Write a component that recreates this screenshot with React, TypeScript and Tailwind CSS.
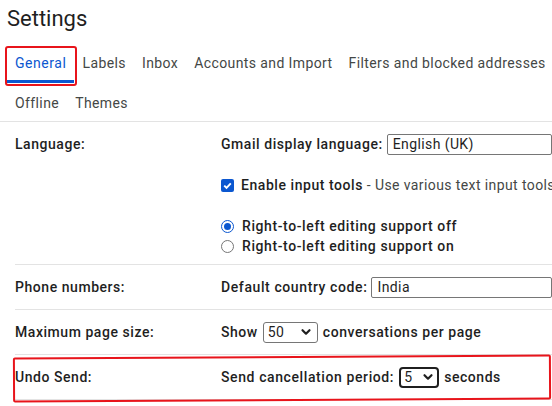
import React from "react";

const Chevron = () => (
  <svg width="12" height="12" viewBox="0 0 12 12" className="shrink-0">
    <path d="M2.5 4.2 L6 7.7 L9.5 4.2" fill="none" stroke="#1f1f1f" strokeWidth="2.2" strokeLinecap="round" strokeLinejoin="round" />
  </svg>
);

const Row = ({ label, children, tall }: { label: string; children: React.ReactNode; tall?: boolean }) => (
  <div className={`ml-[15px] flex border-b border-[#e3e3e3] ${tall ? "" : "h-[45px] items-center"}`}>
    <div className={`w-[206px] shrink-0 font-medium tracking-[0.55px] text-[#1f1f1f] ${tall ? "pt-[12px] leading-[21px]" : ""}`}>{label}</div>
    <div className="flex-1 min-w-0">{children}</div>
  </div>
);

export default function App() {
  const tabs1 = ["General", "Labels", "Inbox", "Accounts and Import", "Filters and blocked addresses"];
  const tabs2 = ["Offline", "Themes"];
  return (
    <div
      className="relative w-[552px] h-[406px] overflow-hidden bg-white text-[14px] tracking-[0.4px] whitespace-nowrap text-[#1f1f1f]"
      style={{ fontFamily: "Roboto, 'Noto Sans', sans-serif" }}
    >
      <div className="pl-[7px] pt-[5px] text-[22px] leading-[28px] tracking-normal text-[#1f1f1f]">Settings</div>
      <div className="flex pl-[7px] mt-[10px]">
        {tabs1.map((t, i) => (
          <div
            key={t}
            className={`h-[40px] px-2 flex items-center shrink-0 ${i === 0 ? "text-[#0b57d0] border-b-[3px] border-[#0b57d0] pt-[3px] tracking-[0.55px]" : "text-[#444746]"}`}
          >
            {t}
          </div>
        ))}
      </div>
      <div className="flex pl-[7px]">
        {tabs2.map((t) => (
          <div key={t} className="h-[38px] pt-[2px] px-2 flex items-center text-[#444746]">
            {t}
          </div>
        ))}
      </div>
      <div className="border-t border-[#e3e3e3]" />

      <Row label="Language:" tall>
        <div className="pt-[12px] pb-[8px]">
          <div className="flex items-center h-[21px]">
            <span className="font-medium tracking-[0.55px]">Gmail display language:</span>
            <div className="ml-[4px] h-[21px] w-[200px] border border-[#767676] rounded-[2px] flex items-center pl-[5px]">
              English (UK)
            </div>
          </div>
          <div className="flex items-center h-[20px] mt-[20px]">
            <span className="w-[13px] h-[13px] rounded-[2px] bg-[#0b57d0] flex items-center justify-center mr-[7px] shrink-0">
              <svg width="11" height="11" viewBox="0 0 11 11">
                <path d="M2.2 5.6 L4.5 7.8 L8.8 3.3" fill="none" stroke="white" strokeWidth="1.9" />
              </svg>
            </span>
            <span className="font-medium tracking-[0.55px]">Enable input tools</span>
            <span className="text-[#444746]">&nbsp;- Use various text input tools</span>
          </div>
          <div className="flex items-center h-[20px] mt-[21px] font-medium tracking-[0.6px]">
            <span className="w-[13px] h-[13px] rounded-full border-[1.5px] border-[#0b57d0] flex items-center justify-center mr-[8px] shrink-0">
              <span className="w-[7px] h-[7px] rounded-full bg-[#0b57d0]" />
            </span>
            Right-to-left editing support off
          </div>
          <div className="flex items-center h-[20px] font-medium tracking-[0.6px]">
            <span className="w-[13px] h-[13px] rounded-full border border-[#767676] mr-[8px] shrink-0" />
            Right-to-left editing support on
          </div>
        </div>
      </Row>

      <Row label="Phone numbers:">
        <div className="flex items-center">
          <span className="font-medium tracking-[0.6px]">Default country code:</span>
          <div className="ml-[4px] h-[21px] w-[200px] border border-[#767676] rounded-[2px] flex items-center pl-[5px]">
            India
          </div>
        </div>
      </Row>

      <Row label="Maximum page size:">
        <div className="flex items-center">
          <span className="font-medium tracking-[0.55px]">Show</span>
          <div className="ml-[5px] h-[21px] w-[55px] border border-[#767676] rounded-[3px] flex items-center justify-between pl-[4px] pr-[5px]">
            <span>50</span>
            <Chevron />
          </div>
          <span className="ml-[5px] font-medium tracking-[0.55px]">conversations per page</span>
        </div>
      </Row>

      <Row label="Undo Send:">
        <div className="flex items-center">
          <span className="font-medium tracking-[0.6px]">Send cancellation period:</span>
          <div className="ml-[5px] h-[21px] w-[40px] border-2 border-[#1f1f1f] rounded-[4px] flex items-center justify-between pl-[3px] pr-[3px]">
            <span>5</span>
            <Chevron />
          </div>
          <span className="ml-[5px] font-medium tracking-[0.55px]">seconds</span>
        </div>
      </Row>

      {/* annotations */}
      <div className="absolute left-[5px] top-[46px] w-[72px] h-[40px] border-2 border-[#e8141b] rounded-[3px] pointer-events-none" />
      <div className="absolute left-[13px] top-[356px] w-[538px] h-[45px] border-2 border-[#e8141b] rounded-[2px] -rotate-[0.3deg] pointer-events-none" />
    </div>
  );
}
